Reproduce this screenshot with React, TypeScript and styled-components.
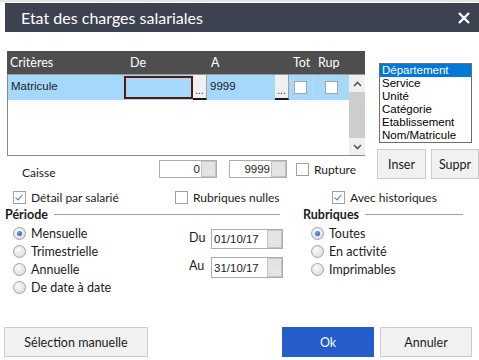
import React from "react";
import styled, { createGlobalStyle } from "styled-components";

const GlobalStyle = createGlobalStyle`
  * { box-sizing: border-box; }
  body {
    margin: 0;
    background: #ffffff;
    font-family: Lato, "Noto Sans", sans-serif;
    color: #1b1b1b;
  }
`;

const CRITERES = [{ name: "Matricule", from: "", to: "9999" }];
const LIST = ["Département", "Service", "Unité", "Catégorie", "Etablissement", "Nom/Matricule"];
const PERIODES = ["Mensuelle", "Trimestrielle", "Annuelle", "De date à date"];
const RUBRIQUES = ["Toutes", "En activité", "Imprimables"];

export default function App() {
  return (
    <>
      <GlobalStyle />
      <Page>
        <TitleBar>
          <Title>Etat des charges salariales</Title>
          <svg width="12" height="12" viewBox="0 0 12 12">
            <path d="M1 1 L11 11 M11 1 L1 11" stroke="#ffffff" strokeWidth="2.4" />
          </svg>
        </TitleBar>

        <TopSection>
          <LeftCol>
            <Grid>
              <GridHeader>
                <HeadCell $w={120}>Critères</HeadCell>
                <HeadCell $w={81}>De</HeadCell>
                <HeadCell $w={82}>A</HeadCell>
                <HeadCell $w={25}>Tot</HeadCell>
                <HeadCell $w={32}>Rup</HeadCell>
              </GridHeader>
              <GridBody>
                <Rows>
                  {CRITERES.map((c) => (
                    <Row key={c.name}>
                      <Cell $w={116}>{c.name}</Cell>
                      <EditCell $w={69}>{c.from}</EditCell>
                      <DotsButton>...</DotsButton>
                      <Cell $w={68}>{c.to}</Cell>
                      <DotsButton>...</DotsButton>
                      <CheckCell $w={24}>
                        <Box />
                      </CheckCell>
                      <CheckCell $w={36} $sep>
                        <Box />
                      </CheckCell>
                    </Row>
                  ))}
                </Rows>
                <ScrollBar>
                  <ScrollBtn>
                    <svg width="9" height="6" viewBox="0 0 9 6">
                      <path d="M1 5 L4.5 1.5 L8 5" stroke="#555" strokeWidth="1.6" fill="none" />
                    </svg>
                  </ScrollBtn>
                  <ScrollTrack />
                  <ScrollBtn>
                    <svg width="9" height="6" viewBox="0 0 9 6">
                      <path d="M1 1 L4.5 4.5 L8 1" stroke="#555" strokeWidth="1.6" fill="none" />
                    </svg>
                  </ScrollBtn>
                </ScrollBar>
              </GridBody>
            </Grid>

            <CaisseRow>
              <CaisseLabel>Caisse</CaisseLabel>
              <Field $w={58}>
                <FieldValue $align="right">0</FieldValue>
                <FieldBtn>...</FieldBtn>
              </Field>
              <Field $w={58} style={{ marginLeft: 12 }}>
                <FieldValue $align="right">9999</FieldValue>
                <FieldBtn>...</FieldBtn>
              </Field>
              <CheckLabel style={{ marginLeft: 9 }}>
                <CheckBox />
                Rupture
              </CheckLabel>
            </CaisseRow>
          </LeftCol>

          <RightCol>
            <ListBox>
              {LIST.map((item, i) => (
                <ListItem key={item} $selected={i === 0}>
                  {item}
                </ListItem>
              ))}
            </ListBox>
            <SmallButtons>
              <Button $w={49} $h={30}>Inser</Button>
              <Button $w={48} $h={30}>Suppr</Button>
            </SmallButtons>
          </RightCol>
        </TopSection>

        <OptionsRow>
          <OptionSlot $w={162}>
            <CheckLabel>
              <CheckBox $checked />
              Détail par salarié
            </CheckLabel>
          </OptionSlot>
          <OptionSlot $w={157}>
            <CheckLabel>
              <CheckBox />
              Rubriques nulles
            </CheckLabel>
          </OptionSlot>
          <OptionSlot>
            <CheckLabel>
              <CheckBox $checked />
              Avec historiques
            </CheckLabel>
          </OptionSlot>
        </OptionsRow>

        <GroupsRow>
          <Group $w={275}>
            <Legend>
              <LegendText>Période</LegendText>
              <LegendLine />
            </Legend>
            <GroupBody>
              <RadioList $w={184}>
                {PERIODES.map((p, i) => (
                  <RadioLabel key={p}>
                    <Radio $checked={i === 0} />
                    {p}
                  </RadioLabel>
                ))}
              </RadioList>
              <DateList>
                <DateRow>
                  <DateLabel>Du</DateLabel>
                  <Field $w={72} $h={20}>
                    <FieldValue>01/10/17</FieldValue>
                    <FieldBtn>...</FieldBtn>
                  </Field>
                </DateRow>
                <DateRow>
                  <DateLabel>Au</DateLabel>
                  <Field $w={72} $h={21}>
                    <FieldValue>31/10/17</FieldValue>
                    <FieldBtn>...</FieldBtn>
                  </Field>
                </DateRow>
              </DateList>
            </GroupBody>
          </Group>
          <Group $w={160}>
            <Legend>
              <LegendText>Rubriques</LegendText>
              <LegendLine />
            </Legend>
            <GroupBody>
              <RadioList>
                {RUBRIQUES.map((r, i) => (
                  <RadioLabel key={r}>
                    <Radio $checked={i === 0} />
                    {r}
                  </RadioLabel>
                ))}
              </RadioList>
            </GroupBody>
          </Group>
        </GroupsRow>

        <Footer>
          <Button $w={144} $h={30}>Sélection manuelle</Button>
          <FooterRight>
            <Button $w={92} $h={30} $primary>Ok</Button>
            <Button $w={92} $h={30}>Annuler</Button>
          </FooterRight>
        </Footer>
      </Page>
    </>
  );
}

const Page = styled.div`
  width: 479px;
  height: 360px;
  display: flex;
  flex-direction: column;
  overflow: hidden;
  border-top: 2px solid #e6e6e6;
  font-size: 12px;
`;

const TitleBar = styled.div`
  margin: 1px 0 0 5px;
  height: 29px;
  background: #3d4251;
  display: flex;
  align-items: center;
  justify-content: space-between;
  padding: 0 9px 0 16px;
  color: #ffffff;
`;

const Title = styled.div`
  font-size: 16px;
`;

const TopSection = styled.div`
  display: flex;
  margin-top: 19px;
`;

const LeftCol = styled.div`
  margin-left: 7px;
  width: 359px;
  display: flex;
  flex-direction: column;
`;

const Grid = styled.div`
  height: 105px;
  display: flex;
  flex-direction: column;
`;

const GridHeader = styled.div`
  height: 24px;
  background: #4e4e4e;
  color: #ffffff;
  display: flex;
  align-items: center;
  padding-left: 3px;
  border-bottom: 1px solid #9a9a9a;
  font-size: 12.5px;
`;

const HeadCell = styled.div<{ $w: number }>`
  width: ${(p) => p.$w}px;
  flex-shrink: 0;
`;

const GridBody = styled.div`
  flex: 1;
  display: flex;
  border-left: 1px solid #8a8a8a;
  border-bottom: 1px solid #8a8a8a;
`;

const Rows = styled.div`
  flex: 1;
`;

const Row = styled.div`
  height: 25px;
  background: #a6d8fb;
  display: flex;
  align-items: stretch;
  font-family: "Liberation Sans", Arial, sans-serif;
  font-size: 11.5px;
`;

const Cell = styled.div<{ $w: number }>`
  width: ${(p) => p.$w}px;
  flex-shrink: 0;
  padding: 5px 0 0 3px;
`;

const EditCell = styled.div<{ $w: number }>`
  width: ${(p) => p.$w}px;
  flex-shrink: 0;
  margin: 1px 0 1px 0;
  border: 2px solid #5a1808;
  background: #a6d8fb;
`;

const DotsButton = styled.div`
  width: 14px;
  flex-shrink: 0;
  background: #f0f0f0;
  border-right: 1px solid #a0a0a0;
  border-bottom: 2px solid #1a1a1a;
  display: flex;
  align-items: flex-end;
  justify-content: center;
  font-size: 10px;
  line-height: 14px;
`;

const CheckCell = styled.div<{ $w: number; $sep?: boolean }>`
  width: ${(p) => p.$w}px;
  flex-shrink: 0;
  display: flex;
  align-items: center;
  padding-left: 5px;
  ${(p) => (p.$sep ? "border-left: 1px solid #c8dbe8; padding-left: 11px;" : "")}
`;

const Box = styled.div`
  width: 13px;
  height: 13px;
  background: #ffffff;
  border: 1px solid #a5a5a5;
`;

const ScrollBar = styled.div`
  width: 16px;
  display: flex;
  flex-direction: column;
  background: #f0f0f0;
`;

const ScrollBtn = styled.div`
  height: 17px;
  display: flex;
  align-items: center;
  justify-content: center;
`;

const ScrollTrack = styled.div`
  flex: 1;
  background: #cdcdcd;
`;

const CaisseRow = styled.div`
  display: flex;
  align-items: center;
  margin-top: 4px;
  height: 18px;
`;

const CaisseLabel = styled.div`
  width: 152px;
  padding-left: 15px;
  margin-top: 7px;
`;

const Field = styled.div<{ $w: number; $h?: number }>`
  width: ${(p) => p.$w}px;
  height: ${(p) => p.$h ?? 18}px;
  flex-shrink: 0;
  border: 1px solid #adadad;
  display: flex;
  background: #ffffff;
  font-family: "Liberation Sans", Arial, sans-serif;
  font-size: 11.5px;
`;

const FieldValue = styled.div<{ $align?: string }>`
  flex: 1;
  display: flex;
  align-items: center;
  justify-content: ${(p) => (p.$align === "right" ? "flex-end" : "flex-start")};
  padding: 0 1px 0 2px;
`;

const FieldBtn = styled.div`
  width: 15px;
  background: #e3e3e3;
  border: 1px solid #c4c4c4;
  color: #ffffff;
  font-size: 9px;
  display: flex;
  align-items: center;
  justify-content: center;
`;

const CheckLabel = styled.label`
  display: flex;
  align-items: center;
  gap: 5px;
  white-space: nowrap;
`;

const CheckBox = styled.span<{ $checked?: boolean }>`
  width: 13px;
  height: 13px;
  border: 1px solid #a0a0a0;
  background: #ffffff;
  display: inline-block;
  position: relative;
  &::after {
    content: "";
    display: ${(p) => (p.$checked ? "block" : "none")};
    position: absolute;
    left: 3px;
    top: 1px;
    width: 3px;
    height: 6px;
    border-right: 1.5px solid #4d72c2;
    border-bottom: 1.5px solid #4d72c2;
    transform: rotate(40deg);
  }
`;

const RightCol = styled.div`
  margin-left: 12px;
  padding-top: 12px;
  display: flex;
  flex-direction: column;
`;

const ListBox = styled.div`
  margin-left: 2px;
  width: 93px;
  height: 80px;
  border: 1px solid #6e6e6e;
  font-family: "Liberation Sans", Arial, sans-serif;
  font-size: 11.5px;
`;

const ListItem = styled.div<{ $selected?: boolean }>`
  height: 13px;
  line-height: 13px;
  padding-left: 2px;
  background: ${(p) => (p.$selected ? "#0078d7" : "transparent")};
  color: ${(p) => (p.$selected ? "#ffffff" : "#000000")};
`;

const SmallButtons = styled.div`
  display: flex;
  gap: 5px;
  margin-top: 6px;
`;

const Button = styled.button<{ $w: number; $h: number; $primary?: boolean }>`
  width: ${(p) => p.$w}px;
  height: ${(p) => p.$h}px;
  flex-shrink: 0;
  font-family: Lato, "Noto Sans", sans-serif;
  font-size: 12.5px;
  padding: 0;
  color: ${(p) => (p.$primary ? "#ffffff" : "#1b1b1b")};
  background: ${(p) => (p.$primary ? "#245dc9" : "#f1f1f1")};
  border: 1px solid ${(p) => (p.$primary ? "#245dc9" : "#cccccc")};
`;

const OptionsRow = styled.div`
  display: flex;
  margin-top: 10px;
  padding-left: 13px;
  height: 16px;
  align-items: center;
`;

const OptionSlot = styled.div<{ $w?: number }>`
  width: ${(p) => (p.$w ? `${p.$w}px` : "auto")};
  flex-shrink: 0;
`;

const GroupsRow = styled.div`
  display: flex;
  gap: 23px;
  margin-top: 1px;
  padding-left: 5px;
`;

const Group = styled.div<{ $w: number }>`
  width: ${(p) => p.$w}px;
  flex-shrink: 0;
  display: flex;
  flex-direction: column;
  font-size: 12.5px;
`;

const Legend = styled.div`
  display: flex;
  align-items: center;
  height: 16px;
`;

const LegendText = styled.div`
  font-weight: bold;
`;

const LegendLine = styled.div`
  flex: 1;
  height: 1px;
  background: #a0a0a0;
  margin-left: 6px;
`;

const GroupBody = styled.div`
  display: flex;
  margin-top: 3px;
`;

const RadioList = styled.div<{ $w?: number }>`
  width: ${(p) => (p.$w ? `${p.$w}px` : "auto")};
  flex-shrink: 0;
  display: flex;
  flex-direction: column;
  padding-left: 8px;
  gap: 2px;
`;

const RadioLabel = styled.label`
  display: flex;
  align-items: center;
  gap: 5px;
  height: 16px;
  white-space: nowrap;
`;

const Radio = styled.span<{ $checked?: boolean }>`
  width: 13px;
  height: 13px;
  border-radius: 50%;
  border: 1px solid #a2a2a2;
  background: radial-gradient(circle at 40% 35%, #fafafa, #d6d6d6);
  display: inline-flex;
  align-items: center;
  justify-content: center;
  &::after {
    content: "";
    display: ${(p) => (p.$checked ? "block" : "none")};
    width: 5px;
    height: 5px;
    border-radius: 50%;
    background: radial-gradient(circle at 40% 35%, #6aa6f0, #0f4fb0);
  }
`;

const DateList = styled.div`
  flex-shrink: 0;
  display: flex;
  flex-direction: column;
  gap: 8px;
  margin-top: 4px;
`;

const DateRow = styled.div`
  display: flex;
  align-items: center;
`;

const DateLabel = styled.div`
  width: 22px;
  flex-shrink: 0;
  margin-top: -4px;
`;

const Footer = styled.div`
  margin-top: auto;
  margin-bottom: 3px;
  display: flex;
  justify-content: space-between;
  padding: 0 7px 0 4px;
`;

const FooterRight = styled.div`
  display: flex;
  gap: 6px;
`;
